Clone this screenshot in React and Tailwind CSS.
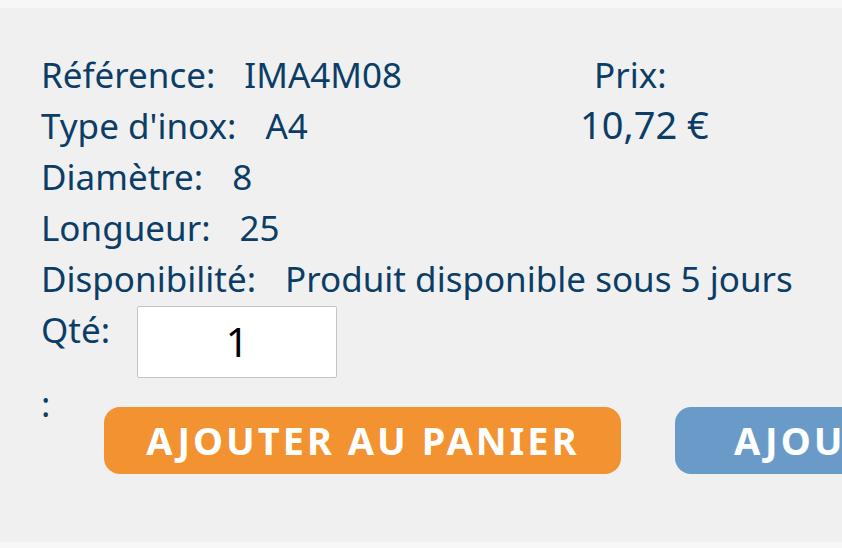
import React from 'react';

const rows = [
  ['Référence:', 'IMA4M08'],
  ["Type d'inox:", 'A4'],
  ['Diamètre:', '8'],
  ['Longueur:', '25'],
  ['Disponibilité:', 'Produit disponible sous 5 jours'],
];

export default function App() {
  return (
    <div
      className="h-[548px] w-[842px] overflow-hidden bg-[#f7f7f7] pt-[8px] pb-[6px]"
      style={{ fontFamily: '"Noto Sans", "Open Sans", sans-serif' }}
    >
      <div className="relative h-full overflow-hidden bg-[#f0f0f0] pl-[41px] pt-[41px] text-[#0b3d66]">
        {/* price column */}
        <div className="absolute left-[580px] top-[41px] leading-[51px]">
          <div className="pl-[14px] text-[35px]">Prix:</div>
          <div className="-mt-[1px] text-[38px]">10,72 €</div>
        </div>

        <div className="text-[35px] leading-[51px]">
          {rows.map(([label, value]) => (
            <div key={label} className="flex whitespace-nowrap">
              <span>{label}</span>
              <span className="ml-[29px]">{value}</span>
            </div>
          ))}
        </div>

        <div className="flex items-start">
          <span className="text-[35px] leading-[51px]">Qté:</span>
          <div className="ml-[27px] mt-[2px] flex h-[72px] w-[200px] items-center justify-center rounded-[2px] border border-[#c4c4c4] bg-white text-[40px] text-black">
            1
          </div>
        </div>

        <div className="flex items-start">
          <span className="text-[35px] leading-[51px]">:</span>
          <div className="ml-[54px] mt-[29px] flex gap-[54px]">
            <button className="flex h-[67px] w-[517px] shrink-0 items-center justify-center rounded-[16px] bg-[#f29230] text-[38px] font-bold tracking-[3px] text-white">
              AJOUTER AU PANIER
            </button>
            <button className="flex h-[67px] w-[517px] shrink-0 items-center justify-center rounded-[16px] bg-[#6a9bc8] text-[38px] font-bold tracking-[3px] text-white">
              AJOUTER AU DEVIS
            </button>
          </div>
        </div>
      </div>
    </div>
  );
}
